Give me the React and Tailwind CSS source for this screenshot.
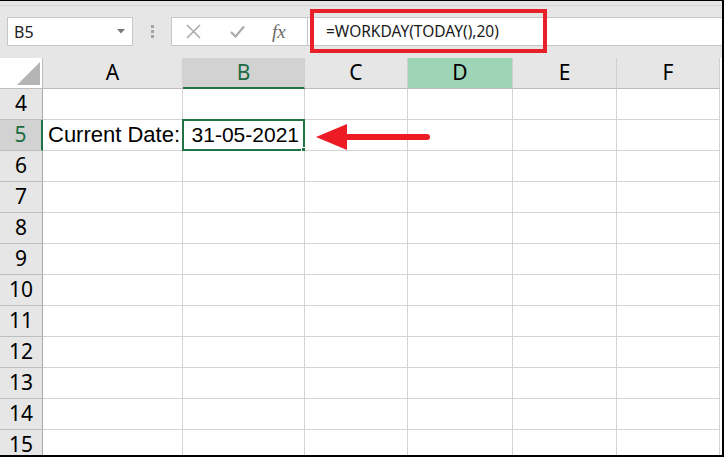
import React from 'react'

const columns = [
  { key: 'A', width: 'w-[140px]' },
  { key: 'B', width: 'w-[122px]' },
  { key: 'C', width: 'w-[103px]' },
  { key: 'D', width: 'w-[105px]' },
  { key: 'E', width: 'w-[104px]' },
  { key: 'F', width: 'w-[103px]' },
]

const rows = [4, 5, 6, 7, 8, 9, 10, 11, 12, 13, 14, 15]

const headerFont = { fontFamily: '"Noto Sans", "Open Sans", sans-serif' }
const cellFont = { fontFamily: '"Liberation Sans", Arial, sans-serif' }

const NameBox = () => (
  <div className="w-[126px] h-[29px] bg-white border border-[#c6c6c6] flex items-center justify-between pl-[6px] pr-[7px]">
    <span className="text-[16px] text-[#222]" style={headerFont}>B5</span>
    <svg width="8" height="5" viewBox="0 0 8 5">
      <path d="M0 0 L8 0 L4 4.5 Z" fill="#7a7a7a" />
    </svg>
  </div>
)

const FormulaButtons = () => (
  <div className="w-[137px] h-[29px] bg-white border border-[#c6c6c6] flex items-center">
    <svg className="ml-[14px]" width="15" height="15" viewBox="0 0 15 15">
      <path d="M1 1 L14 14 M14 1 L1 14" stroke="#ababab" strokeWidth="1.6" />
    </svg>
    <svg className="ml-[29px]" width="15" height="13" viewBox="0 0 15 13">
      <path d="M1 7 L5.5 11.5 L14 1.5" stroke="#ababab" strokeWidth="2.2" fill="none" />
    </svg>
    <span
      className="ml-[27px] text-[19px] italic text-[#6a6a6a] leading-none"
      style={{ fontFamily: '"Liberation Serif", "Times New Roman", serif' }}
    >
      fx
    </span>
  </div>
)

const Toolbar = () => (
  <div className="relative">
    <div className="h-[4px]" />
    <div className="h-px bg-[#d5d5d5]" />
    <div className="flex items-center pt-[11px] pb-[12px] pl-[7px]">
      <NameBox />
      <div className="w-[18px] ml-[10px] flex flex-col items-center gap-[2px]">
        <span className="w-[3px] h-[3px] bg-[#a3a3a3]" />
        <span className="w-[3px] h-[3px] bg-[#a3a3a3]" />
        <span className="w-[3px] h-[3px] bg-[#a3a3a3]" />
      </div>
      <div className="ml-[10px]">
        <FormulaButtons />
      </div>
      <div className="flex-1 h-[29px] bg-white border-y border-[#c6c6c6] flex items-center pl-[18px]">
        <span className="text-[15.5px] text-[#1a1a1a]" style={headerFont}>
          =WORKDAY(TODAY(),20)
        </span>
      </div>
    </div>
    <div className="absolute left-[310px] top-[8px] w-[237px] h-[44px] border-[4px] border-[#e8202a]" />
  </div>
)

const ColumnHeaders = () => (
  <div className="flex h-[31px]">
    <div className="w-[43px] h-full border-r border-b border-[#bdbdbd] relative">
      <svg className="absolute left-[17px] top-[4px]" width="24" height="24" viewBox="0 0 24 24">
        <path d="M0 23 L23 23 L23 0 Z" fill="#b5b5b5" />
      </svg>
    </div>
    {columns.map((c) => {
      let cls = 'bg-[#e6e6e6] border-b border-[#bdbdbd] text-black'
      if (c.key === 'B') cls = 'bg-[#d2d2d2] border-b-2 border-[#217346] text-[#1e6b41]'
      if (c.key === 'D') cls = 'bg-[#9fd5b7] border-b border-[#bdbdbd] text-black'
      return (
        <div
          key={c.key}
          className={`${c.width} h-full flex items-center justify-center border-r border-r-[#d0d0d0] text-[21px] ${cls}`}
          style={headerFont}
        >
          {c.key}
        </div>
      )
    })}
  </div>
)

const Row = ({ n }) => {
  const active = n === 5
  return (
    <div className="flex h-[31px]">
      <div
        className={`w-[43px] h-full flex items-center justify-center border-b border-[#bdbdbd] text-[21px] ${
          active ? 'bg-[#d2d2d2] text-[#1e6b41] border-r-2 border-r-[#217346]' : 'bg-[#e6e6e6] text-black border-r border-r-[#a9a9a9]'
        }`}
        style={headerFont}
      >
        {n}
      </div>
      {columns.map((c) => (
        <div
          key={c.key}
          className={`${c.width} h-full bg-white border-r border-b border-[#d4d4d4] relative text-[22px] text-black leading-[30px]`}
          style={cellFont}
        >
          {active && c.key === 'A' && <span className="pl-[5px] whitespace-nowrap">Current Date:</span>}
          {active && c.key === 'B' && (
            <>
              <div className="text-right pr-[5px] whitespace-nowrap text-[21px]">31-05-2021</div>
              <div className="absolute -left-px -top-px -right-px -bottom-px border-2 border-[#217346]" />
              <div className="absolute -right-[4px] -bottom-[4px] w-[7px] h-[7px] bg-[#217346] border border-white" />
            </>
          )}
        </div>
      ))}
    </div>
  )
}

const Arrow = () => (
  <svg className="absolute left-[314px] top-[120px]" width="118" height="32" viewBox="0 0 118 32">
    <path d="M2 16 L33 3 L33 29 Z" fill="#ed1c24" />
    <line x1="31" y1="16" x2="113" y2="16" stroke="#ed1c24" strokeWidth="6" strokeLinecap="round" />
  </svg>
)

export default function App() {
  return (
    <div className="w-[724px] h-[457px] overflow-hidden bg-[#e6e6e6] border-t border-r-2 border-b-2 border-black">
      <div className="relative h-full">
        <Toolbar />
        <div className="bg-white">
          <ColumnHeaders />
          {rows.map((n) => (
            <Row key={n} n={n} />
          ))}
        </div>
        <Arrow />
      </div>
    </div>
  )
}
